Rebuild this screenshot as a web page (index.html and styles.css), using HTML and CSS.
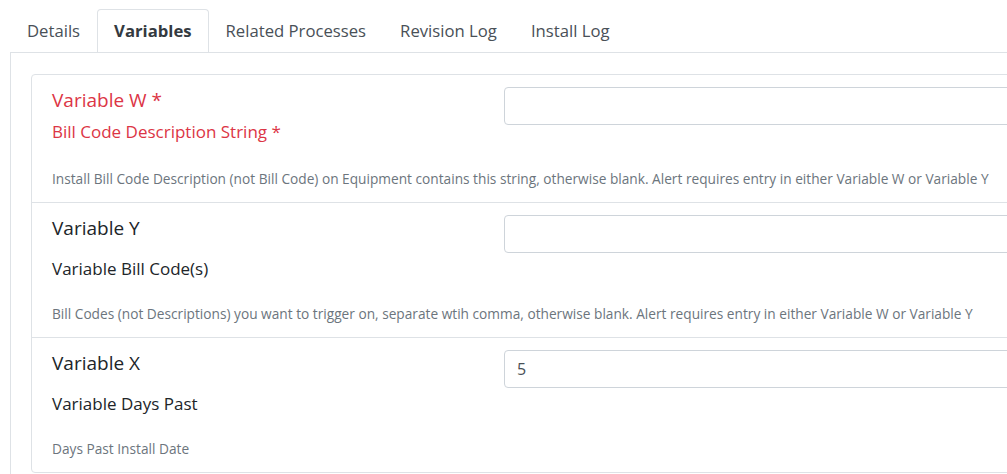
FILE: index.html
```html
<!DOCTYPE html>
<html lang="en">
<head>
  <meta charset="UTF-8">
  <meta name="viewport" content="width=device-width, initial-scale=1">
  <title>Alert Variables</title>
  <link rel="stylesheet" href="styles.css">
</head>
<body>

  <div class="page">
    <ul class="tabs">
      <li class="tab">Details</li>
      <li class="tab active">Variables</li>
      <li class="tab">Related Processes</li>
      <li class="tab">Revision Log</li>
      <li class="tab">Install Log</li>
    </ul>

    <div class="panel">
      <div class="card">

        <div class="field first">
          <div class="labels">
            <label class="name required">Variable W *</label>
            <label class="desc required">Bill Code Description String *</label>
          </div>
          <input type="text" class="input" value="">
          <p class="help">Install Bill Code Description (not Bill Code) on Equipment contains this string, otherwise blank. Alert requires entry in either Variable W or Variable Y</p>
        </div>

        <div class="field">
          <div class="labels">
            <label class="name">Variable Y</label>
            <label class="desc">Variable Bill Code(s)</label>
          </div>
          <input type="text" class="input" value="">
          <p class="help">Bill Codes (not Descriptions) you want to trigger on, separate wtih comma, otherwise blank. Alert requires entry in either Variable W or Variable Y</p>
        </div>

        <div class="field">
          <div class="labels">
            <label class="name">Variable X</label>
            <label class="desc">Variable Days Past</label>
          </div>
          <input type="text" class="input" value="5">
          <p class="help">Days Past Install Date</p>
        </div>

      </div>
    </div>
  </div>

</body>
</html>
```

FILE: styles.css
```css
html, body {
  overflow: hidden;
}
body {
  margin: 0;
  background: #fff;
  font-family: "Open Sans", "Noto Sans", Arial, sans-serif;
  color: #212529;
}
.page {
  width: 1400px;
  padding: 9px 0 0 10px;
}

/* tabs */
.tabs {
  display: flex;
  list-style: none;
  margin: 0;
  padding: 0;
}
.tab {
  padding: 9px 16px;
  line-height: 24px;
  font-size: 16.7px;
  color: #495057;
  border: 1px solid transparent;
  border-bottom: none;
  border-radius: 4px 4px 0 0;
}
.tab.active {
  font-weight: bold;
  color: #343a40;
  border-color: #dee2e6;
  background: #fff;
}

/* panel + card */
.panel {
  border-top: 1px solid #dee2e6;
  border-left: 1px solid #dee2e6;
  padding: 21px 0 0 20px;
  height: 500px;
}
.card {
  border: 1px solid #dee2e6;
  border-radius: 4px;
}
.field {
  display: grid;
  grid-template-columns: 452px 1fr;
  padding: 12px 20px 13px;
  border-top: 1px solid #dee2e6;
}
.field.first {
  border-top: none;
}
.labels {
  padding-top: 1px;
}
.labels label {
  display: block;
  line-height: 24px;
}
.labels .name {
  font-size: 19px;
}
.labels .desc {
  font-size: 17px;
  margin-top: 17px;
}
.field.first .desc {
  margin-top: 8px;
}
.required {
  color: #dc3545;
}
.input {
  align-self: start;
  box-sizing: border-box;
  width: 100%;
  height: 38px;
  padding: 6px 12px;
  font-family: inherit;
  font-size: 16px;
  color: #495057;
  border: 1px solid #ced4da;
  border-radius: 4px;
  outline: none;
}
.help {
  grid-column: 1 / -1;
  margin: 23px 0 0;
  font-size: 13.7px;
  line-height: 20px;
  color: #6c757d;
}
.field.first .help {
  margin-top: 25px;
}
```
